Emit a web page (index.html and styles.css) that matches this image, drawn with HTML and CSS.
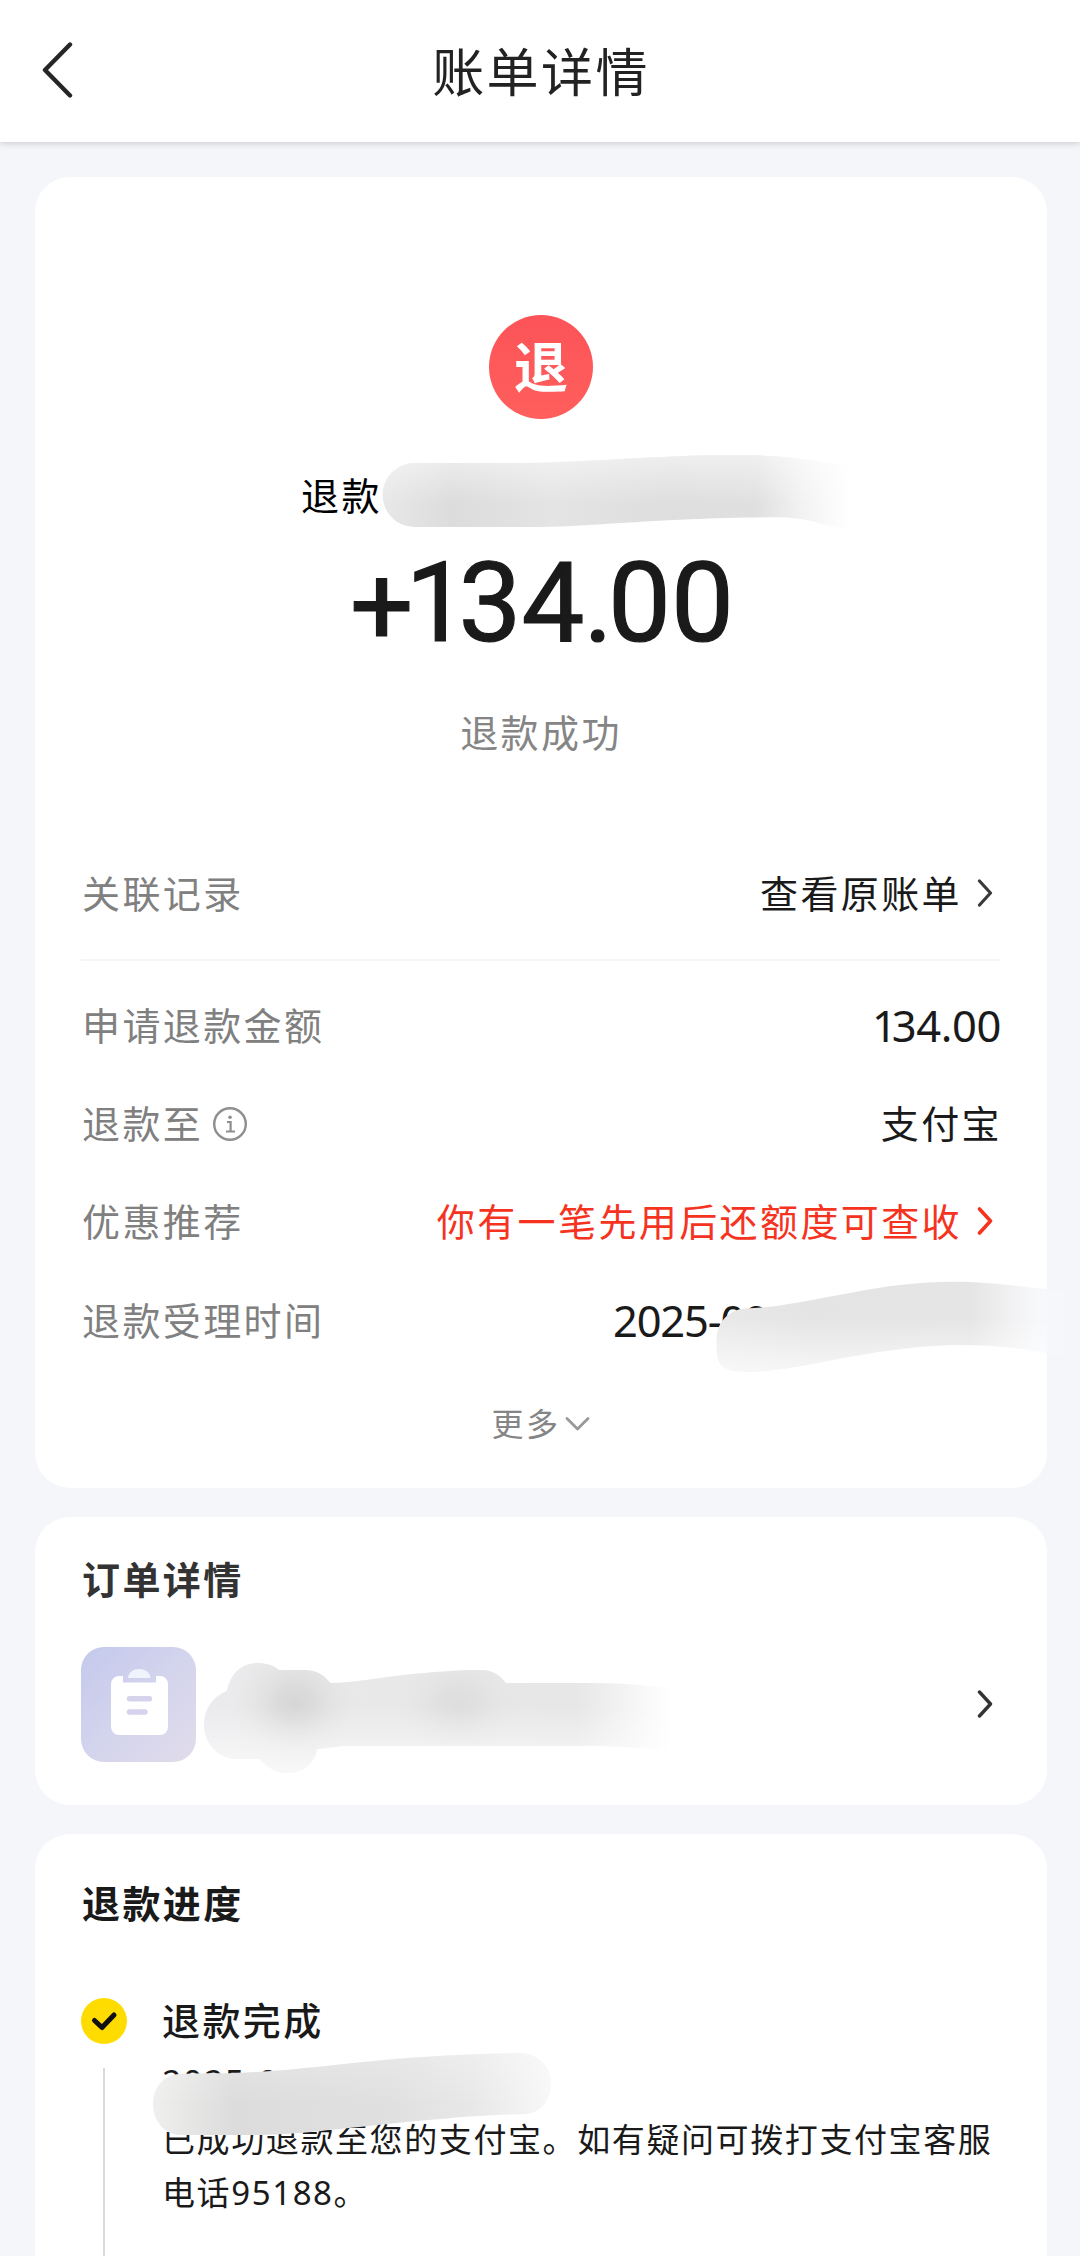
FILE: index.html
```html
<!DOCTYPE html>
<html lang="zh-CN">
<head>
<meta charset="utf-8">
<title>账单详情</title>
<link rel="stylesheet" href="styles.css">
</head>
<body>
<div class="page">
  <header class="navbar">
    <svg class="back" width="32" height="58" viewBox="0 0 32 58"><path d="M28 3.500 3 29l25 25.500" fill="none" stroke="#262626" stroke-width="4.400" stroke-linecap="round" stroke-linejoin="round"/></svg>
    <h1 class="title">账单详情</h1>
  </header>

  <main class="content">
    <section class="card bill">
      <div class="badge">退</div>
      <div class="payee">退款</div>
      <div class="amount"><span class="plus">+</span><span class="one">1</span>3<span class="four">4</span><span class="dot">.</span>00</div>
      <div class="status">退款成功</div>

      <div class="row linked">
        <span class="label">关联记录</span>
        <span class="value link">查看原账单<svg class="chev" width="16" height="28" viewBox="0 0 16 28"><path d="M2.500 2 13.500 14l-11 12" fill="none" stroke="#3a3a3a" stroke-width="3.200" stroke-linecap="round" stroke-linejoin="round"/></svg></span>
      </div>
      <div class="rows">
        <div class="row"><span class="label">申请退款金额</span><span class="value num"><span class="narrow">1</span>34.00</span></div>
        <div class="row">
          <span class="label">退款至<svg class="info" width="36" height="36" viewBox="0 0 36 36" fill="none" stroke="#8e8e8e"><circle cx="18" cy="18" r="15.800" stroke-width="2.400"/><path d="M15 16h3.600v9.500M14 25.500h9" stroke-width="2.200"/><circle cx="18" cy="11.300" r="1.800" fill="#8e8e8e" stroke="none"/></svg></span>
          <span class="value">支付宝</span>
        </div>
        <div class="row">
          <span class="label">优惠推荐</span>
          <span class="value link promo">你有一笔先用后还额度可查收<svg class="chev" width="16" height="28" viewBox="0 0 16 28"><path d="M2.500 2 13.500 14l-11 12" fill="none" stroke="#f5331f" stroke-width="3.600" stroke-linecap="round" stroke-linejoin="round"/></svg></span>
        </div>
        <div class="row"><span class="label">退款受理时间</span><span class="value num time">2025-09</span></div>
      </div>
      <div class="more">更多<svg width="25" height="16" viewBox="0 0 25 16"><path d="M2 2.500 12.500 13 23 2.500" fill="none" stroke="#999" stroke-width="2.800" stroke-linecap="round" stroke-linejoin="round"/></svg></div>
    </section>

    <section class="card order">
      <h2 class="heading">订单详情</h2>
      <div class="order-row">
        <svg width="115" height="115" viewBox="0 0 115 115">
          <defs><linearGradient id="tile" x1="0" y1="0" x2="1" y2="1"><stop offset="0" stop-color="#c4c9ec"/><stop offset=".5" stop-color="#d3d4ed"/><stop offset="1" stop-color="#e1dcea"/></linearGradient></defs>
          <rect width="115" height="115" rx="23" fill="url(#tile)"/>
          <path d="M38 29h4v6.500h33V29h4a8 8 0 0 1 8 8v43a8 8 0 0 1-8 8H38a8 8 0 0 1-8-8V37a8 8 0 0 1 8-8z" fill="#fff"/>
          <path d="M47 31c1-12 21.500-12 22.500 0z" fill="#eff3fc"/>
          <path d="M48.500 51.700h20M48.500 65h15.500" stroke="#d5d4ec" stroke-width="5.400" stroke-linecap="round"/>
        </svg>
        <svg class="chev" width="16" height="28" viewBox="0 0 16 28"><path d="M2.500 2 13.500 14l-11 12" fill="none" stroke="#333" stroke-width="3.400" stroke-linecap="round" stroke-linejoin="round"/></svg>
      </div>
    </section>

    <section class="card progress">
      <h2 class="heading dark">退款进度</h2>
      <div class="step">
        <div class="rail">
          <svg width="46" height="46" viewBox="0 0 46 46"><circle cx="23" cy="23" r="23" fill="#ffdc00"/><path d="M13.500 22.500 21 29.500 33 17" fill="none" stroke="#111" stroke-width="5" stroke-linecap="round" stroke-linejoin="round"/></svg>
          <div class="line"></div>
        </div>
        <div class="step-body">
          <div class="step-title">退款完成</div>
          <div class="step-date">2025-09</div>
          <div class="step-text">已成功退款至您的支付宝。如有疑问可拨打支付宝客服电话95188。</div>
        </div>
      </div>
    </section>
  </main>

  <!-- Brush strokes that hide private details -->
  <svg class="strokes" width="1080" height="2256" viewBox="0 0 1080 2256">
    <defs>
      <linearGradient id="g1" gradientUnits="userSpaceOnUse" x1="382" y1="0" x2="850" y2="0"><stop offset="0" stop-color="#e8e8e8"/><stop offset=".15" stop-color="#dcdcdc"/><stop offset=".36" stop-color="#e5e4e4"/><stop offset=".62" stop-color="#dedede"/><stop offset=".8" stop-color="#e0e0e0"/><stop offset=".9" stop-color="#f3f3f3"/><stop offset="1" stop-color="#fff"/></linearGradient>
      <linearGradient id="g2" gradientUnits="userSpaceOnUse" x1="716" y1="0" x2="1080" y2="0"><stop offset="0" stop-color="#e9e9e9"/><stop offset=".25" stop-color="#e4e4e4"/><stop offset=".7" stop-color="#e5e5e5"/><stop offset=".8" stop-color="#f0f0f1"/><stop offset=".88" stop-color="#f7f8fa"/><stop offset="1" stop-color="#f4f6fa"/></linearGradient>
      <linearGradient id="g3" gradientUnits="userSpaceOnUse" x1="204" y1="0" x2="670" y2="0"><stop offset="0" stop-color="#ebebee"/><stop offset=".2" stop-color="#e9e9e9"/><stop offset=".55" stop-color="#e8e8e8"/><stop offset=".8" stop-color="#e7e7e7"/><stop offset="1" stop-color="#fff"/></linearGradient>
      <linearGradient id="g4" gradientUnits="userSpaceOnUse" x1="153" y1="0" x2="552" y2="0"><stop offset="0" stop-color="#efefee"/><stop offset=".2" stop-color="#dcdcdc"/><stop offset=".6" stop-color="#e0e0e0"/><stop offset=".8" stop-color="#e8e8e8"/><stop offset="1" stop-color="#f8f8f8"/></linearGradient>
      <radialGradient id="spot"><stop offset="0" stop-color="#d6d6d6"/><stop offset=".3" stop-color="#d8d8d8" stop-opacity=".8"/><stop offset="1" stop-color="#e4e4e4" stop-opacity="0"/></radialGradient>
      <linearGradient id="top" x1="0" y1="0" x2="0" y2="1"><stop offset="0" stop-color="#fff" stop-opacity=".5"/><stop offset=".65" stop-color="#fff" stop-opacity="0"/></linearGradient>
      <linearGradient id="foot" x1="0" y1="0" x2="0" y2="1"><stop offset=".4" stop-color="#fff" stop-opacity="0"/><stop offset="1" stop-color="#fff" stop-opacity=".7"/></linearGradient>
      <clipPath id="inside"><rect x="35" y="1240" width="1012" height="160"/></clipPath>
      <path id="s1" d="M414.500 463H525C590 462 640 457 701 455.500S790 457 808 460L850 466V530L827 525.500C800 516.500 780 517 758 517.500 700 518 663 520.600 605 524 570 526.500 550 527 525 527H414.500a32 32 0 0 1 0-64z"/>
      <path id="s2" d="M716.700 1339.600C716.700 1321.400 730 1309.600 745 1308.600 780 1307.400 810 1300 850 1293 885 1286 920 1281.800 953 1281.800S1010 1285 1047 1289.300L1080 1293.600V1357.900L1047 1353.600C1020 1347 985 1344.500 953 1345S885 1350.400 850 1356.800C820 1362 780 1371.800 747 1371.800S717 1358 716.700 1339.600z"/>
      <path id="s3" d="M204 1725C204 1708 213 1697 227 1690.500 231 1672 243 1663 257.600 1663 266 1663 273 1665 279 1670H305C316 1670 324 1675 330.600 1683 352 1683 380 1677 413 1674S460 1670 482 1670C492 1670 500 1675 506 1683H591C615 1683 635 1684 678 1689V1751L650 1749C620 1746 600 1745.700 581 1745.700H348C338 1746 328 1748 317 1749 315 1764 301 1773 287.500 1773 275 1773 267 1767 260 1759H237.600C218 1759 204 1743 204 1725z"/>
      <path id="s4" d="M153 2104C153 2088 163 2075 180 2074 200 2073 220 2073.500 237 2073 290 2071 340 2064 383 2060S480 2053.500 519 2053C537 2053 551 2066 551 2083S541 2113 526 2114C490 2115 470 2116 440 2119 400 2122 370 2126 344 2128.500 310 2132 290 2135 250 2135H180C164 2134 153 2121 153 2104z"/>
      <clipPath id="c3"><use href="#s3"/></clipPath>
    </defs>
    <use href="#s1" fill="url(#g1)"/><use href="#s1" fill="url(#top)"/>
    <use href="#s2" fill="url(#g2)"/><use href="#s2" fill="url(#foot)" clip-path="url(#inside)"/>
    <use href="#s3" fill="url(#g3)"/>
    <g clip-path="url(#c3)" fill="url(#spot)"><ellipse cx="295" cy="1704" rx="62" ry="62"/><ellipse cx="458" cy="1704" rx="62" ry="56" opacity=".6"/></g>
    <use href="#s3" fill="url(#foot)"/>
    <use href="#s4" fill="url(#g4)"/><use href="#s4" fill="url(#top)" opacity=".5"/>
  </svg>
</div>
</body>
</html>
```
FILE: styles.css
```css
* { box-sizing: border-box; margin: 0; padding: 0; }

body {
  background: #f4f6fa;
  color: #1a1a1a;
  font-family: "Noto Sans", "Noto Sans CJK SC", sans-serif;
  font-size: 38px;
  letter-spacing: 2.4px;
}

svg { display: block; flex: none; }

.page {
  position: relative;
  width: 1080px;
  height: 2256px;
  overflow: hidden;
  display: flex;
  flex-direction: column;
}

.navbar {
  flex: none;
  height: 142px;
  padding: 0 40px 0 42px;
  display: grid;
  grid-template-columns: 32px 1fr 32px;
  align-items: center;
  background: #fff;
  box-shadow: 0 1px 7px rgba(0, 0, 0, .2);
}

.back { margin-top: -2px; }

.title {
  margin-top: 2px;
  font-size: 52px;
  font-weight: 400;
  line-height: 80px;
  text-align: center;
  color: #222;
}

.content {
  flex: 1;
  min-height: 0;
  padding: 35px 33px 0 35px;
  display: flex;
  flex-direction: column;
  gap: 29px;
}

.card {
  flex: none;
  padding: 0 46px;
  border-radius: 35px;
  background: #fff;
}

.bill { height: 1311px; padding-top: 138px; }

.badge {
  width: 104px;
  height: 104px;
  margin: 0 auto;
  border-radius: 50%;
  background: linear-gradient(#fc5358, #ff5f5d);
  color: #fff;
  font-size: 54px;
  font-weight: 700;
  line-height: 104px;
  letter-spacing: 0;
  text-align: center;
}

.payee {
  margin-top: 46px;
  padding-left: 220px;
  line-height: 60px;
  color: #000;
}

.amount {
  height: 100px;
  margin-top: 28px;
  padding-left: 269px;
  font-family: Roboto, sans-serif;
  font-size: 112px;
  font-weight: 400;
  line-height: 100px;
  letter-spacing: 0;
  white-space: nowrap;
  -webkit-text-stroke: 1.2px #1a1a1a;
}

.plus { letter-spacing: -8px; line-height: 1px; vertical-align: -3px; }
.one { letter-spacing: -10px; }
.four { letter-spacing: -1px; }
.dot { letter-spacing: -5px; }

.status {
  margin-top: 49px;
  line-height: 60px;
  text-align: center;
  color: #858585;
}

.row {
  height: 98.4px;
  display: flex;
  align-items: center;
  justify-content: space-between;
}

.linked {
  height: 134px;
  margin-top: 65px;
  border-bottom: 2px solid #f5f5f7;
}

.rows { margin-top: 15px; }

.label, .value { padding-bottom: 4px; }
.label { display: flex; align-items: center; padding-left: 1px; color: #808080; }
.info { margin: 5px 0 0 9px; }

.value { margin-right: -1px; }
.link { display: flex; align-items: center; padding-right: 9px; }
.link .chev { margin: 3px 0 0 15px; }
.promo { color: #f5331f; }
.num { padding-bottom: 0; margin-right: 0; font-size: 43.5px; letter-spacing: -.4px; }
.narrow { letter-spacing: -5px; }
.time { width: 388px; letter-spacing: -1.200px; }

.more {
  margin-top: 24px;
  display: flex;
  align-items: center;
  justify-content: center;
  gap: 5px;
  font-size: 32px;
  line-height: 60px;
  color: #858585;
}

.order { height: 288px; padding-top: 32px; }

.heading {
  padding-left: 1px;
  font-size: 38px;
  font-weight: 700;
  line-height: 60px;
  color: #333;
}

.heading.dark { color: #1a1a1a; }

.order-row {
  margin-top: 38px;
  padding-right: 8px;
  display: flex;
  align-items: center;
  justify-content: space-between;
}

.order-row .chev { margin-top: -2px; }

.progress { height: 480px; padding-top: 39px; }

.step { margin-top: 57px; display: flex; gap: 35px; }
.rail { width: 46px; padding-top: 8px; display: flex; flex-direction: column; align-items: center; }
.line { flex: none; width: 2px; height: 240px; margin-top: 24px; background: #d9d9d9; }
.step-body { width: 840px; }
.step-title { font-weight: 500; line-height: 60px; }
.step-date { height: 57px; margin-top: 6px; font-size: 34px; line-height: 52px; letter-spacing: 1.500px; }
.step-text { font-size: 33px; line-height: 53px; letter-spacing: 1.600px; }

.strokes { position: absolute; left: 0; top: 0; }
```
